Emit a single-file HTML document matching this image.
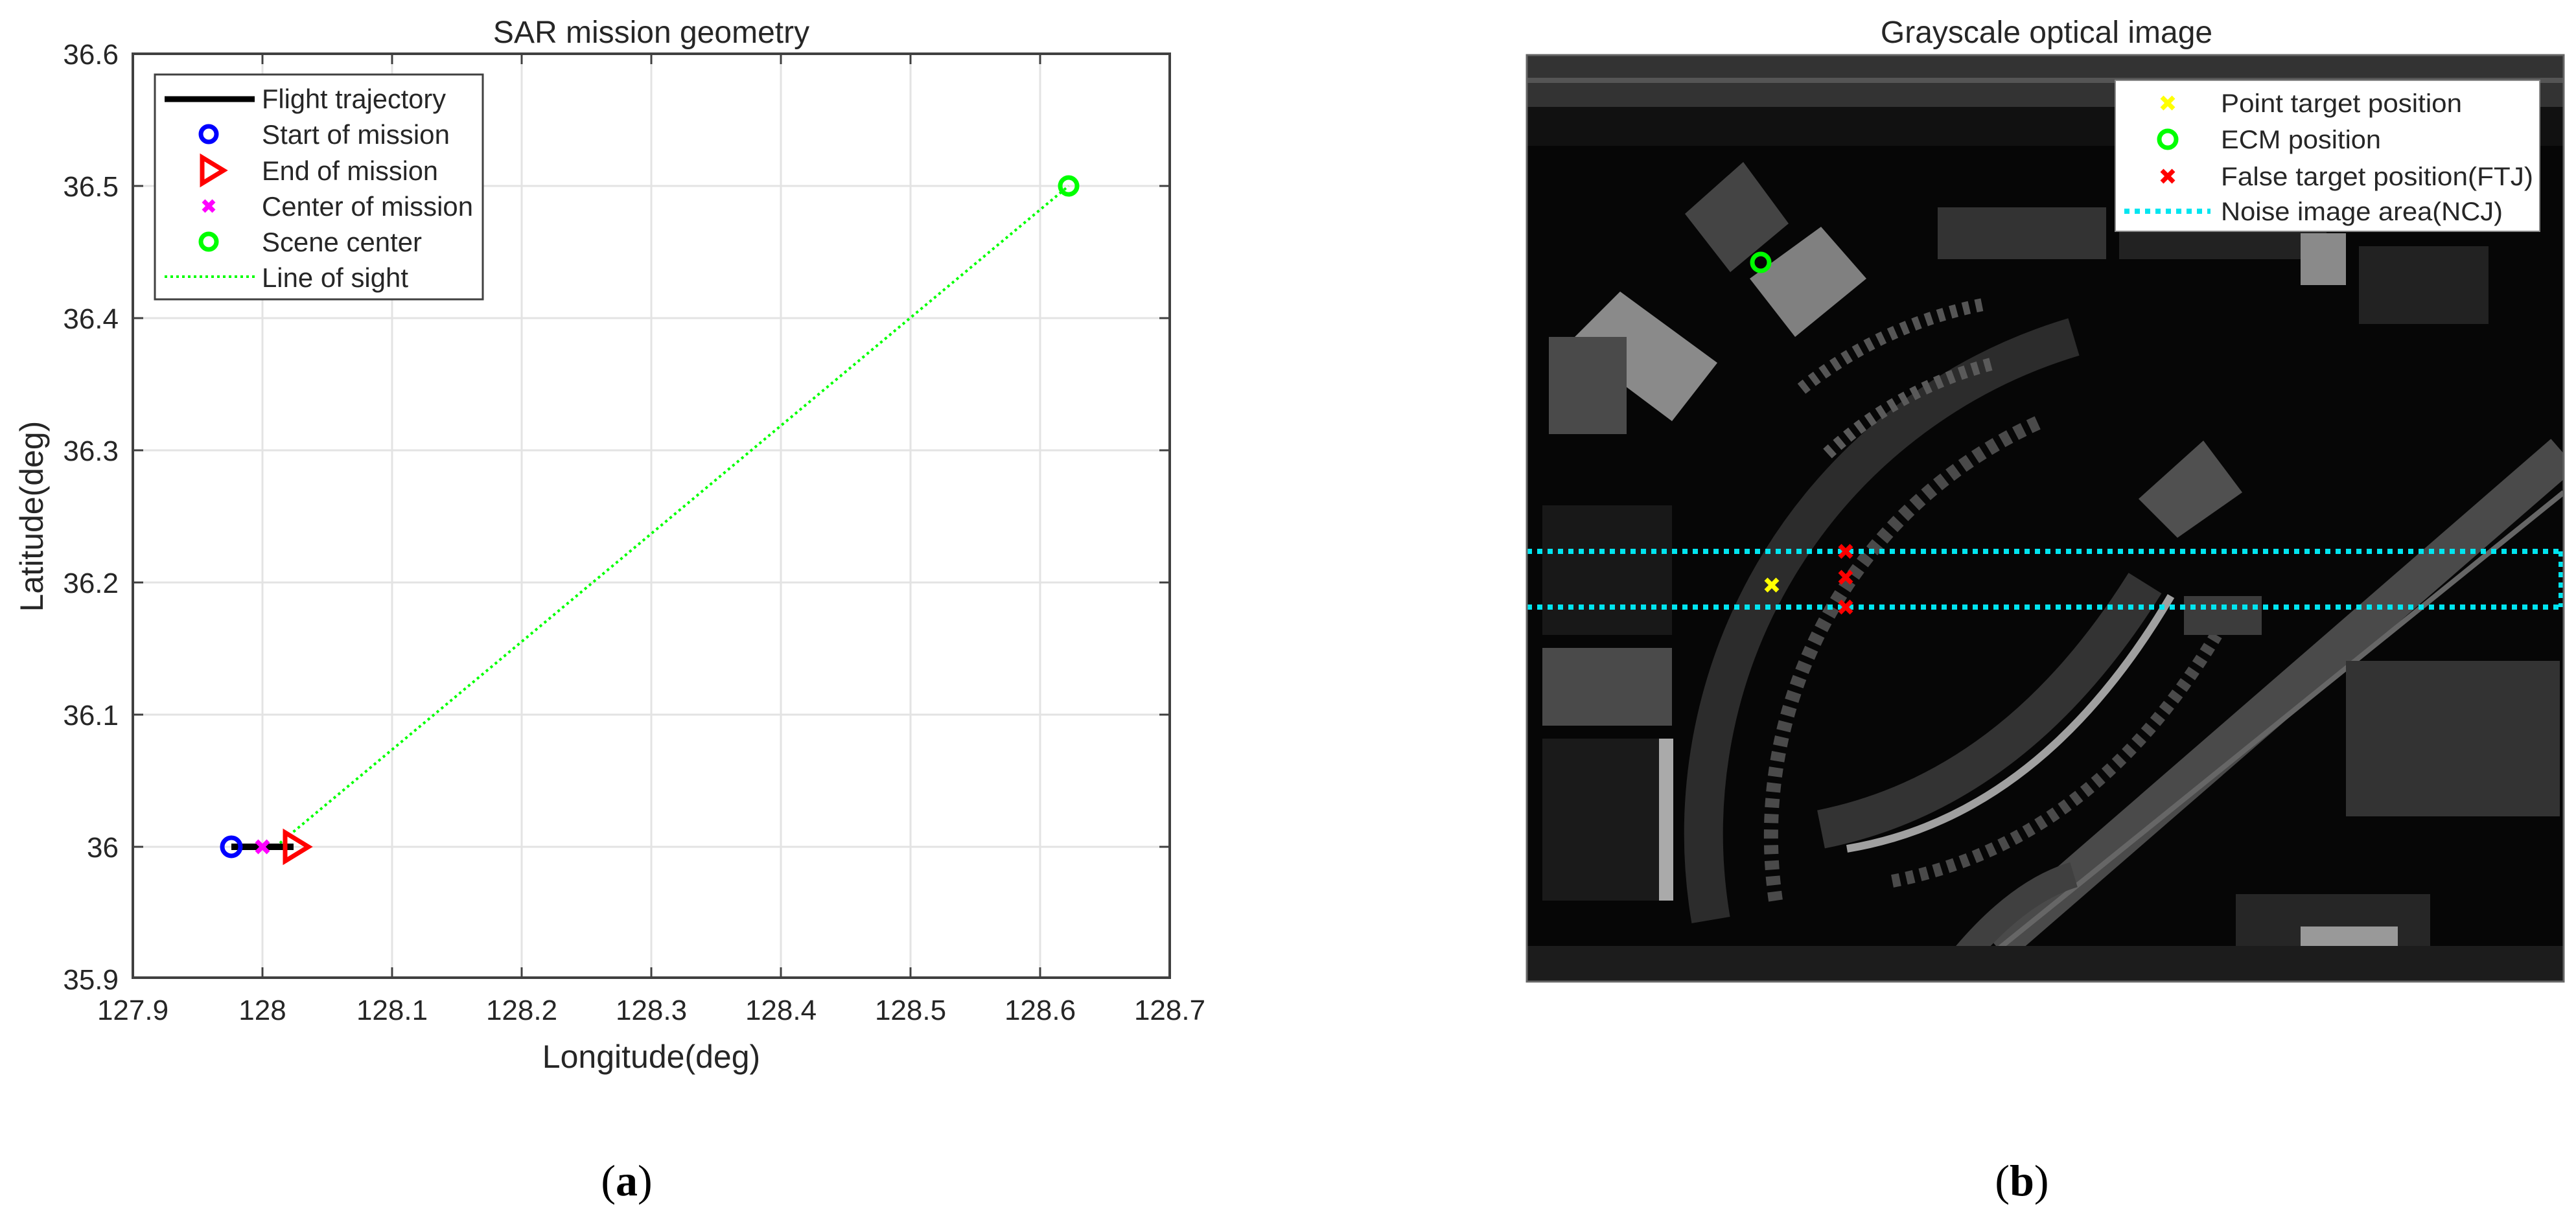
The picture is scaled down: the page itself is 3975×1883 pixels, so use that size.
<!DOCTYPE html>
<html><head><meta charset="utf-8"><style>
html,body{margin:0;padding:0;background:#fff;}
svg{display:block;}
text{font-family:"Liberation Sans",Arial,sans-serif;fill:#262626;}
</style></head><body>
<svg width="3975" height="1883" viewBox="0 0 3975 1883" xmlns="http://www.w3.org/2000/svg">
<rect width="3975" height="1883" fill="#fff"/>
<!-- ===== Panel (a) ===== -->
<text x="1005" y="66" font-size="48" text-anchor="middle" fill="#000">SAR mission geometry</text>
<g stroke="#e3e3e3" stroke-width="3">
<line x1="405" y1="83" x2="405" y2="1509"/><line x1="605" y1="83" x2="605" y2="1509"/>
<line x1="805" y1="83" x2="805" y2="1509"/><line x1="1005" y1="83" x2="1005" y2="1509"/>
<line x1="1205" y1="83" x2="1205" y2="1509"/><line x1="1405" y1="83" x2="1405" y2="1509"/>
<line x1="1605" y1="83" x2="1605" y2="1509"/>
<line x1="205" y1="287" x2="1805" y2="287"/><line x1="205" y1="491" x2="1805" y2="491"/>
<line x1="205" y1="695" x2="1805" y2="695"/><line x1="205" y1="899" x2="1805" y2="899"/>
<line x1="205" y1="1103" x2="1805" y2="1103"/><line x1="205" y1="1307" x2="1805" y2="1307"/>
</g>
<rect x="205" y="83" width="1600" height="1426" fill="none" stroke="#404040" stroke-width="4"/>
<g stroke="#404040" stroke-width="3">
<path d="M405 1509v-16M605 1509v-16M805 1509v-16M1005 1509v-16M1205 1509v-16M1405 1509v-16M1605 1509v-16"/>
<path d="M405 83v16M605 83v16M805 83v16M1005 83v16M1205 83v16M1405 83v16M1605 83v16"/>
<path d="M205 287h16M205 491h16M205 695h16M205 899h16M205 1103h16M205 1307h16"/>
<path d="M1805 287h-16M1805 491h-16M1805 695h-16M1805 899h-16M1805 1103h-16M1805 1307h-16"/>
</g>
<g font-size="44" text-anchor="end">
<text x="183" y="99">36.6</text><text x="183" y="303">36.5</text><text x="183" y="507">36.4</text>
<text x="183" y="711">36.3</text><text x="183" y="915">36.2</text><text x="183" y="1119">36.1</text>
<text x="183" y="1323">36</text><text x="183" y="1527">35.9</text>
</g>
<g font-size="44" text-anchor="middle">
<text x="205" y="1574">127.9</text><text x="405" y="1574">128</text><text x="605" y="1574">128.1</text>
<text x="805" y="1574">128.2</text><text x="1005" y="1574">128.3</text><text x="1205" y="1574">128.4</text>
<text x="1405" y="1574">128.5</text><text x="1605" y="1574">128.6</text><text x="1805" y="1574">128.7</text>
</g>
<text x="1005" y="1648" font-size="50" text-anchor="middle">Longitude(deg)</text>
<text transform="translate(66,797) rotate(-90)" font-size="50" text-anchor="middle">Latitude(deg)</text>
<!-- data -->
<line x1="425" y1="1307" x2="1649" y2="287" stroke="#00ff00" stroke-width="4" stroke-dasharray="4 5"/>
<line x1="357" y1="1307" x2="453" y2="1307" stroke="#000" stroke-width="10"/>
<circle cx="357" cy="1307" r="14" fill="none" stroke="#0000ff" stroke-width="7"/>
<path d="M440 1285 L476 1307 L440 1329 Z" fill="none" stroke="#ff0000" stroke-width="7" stroke-linejoin="miter"/>
<path d="M396 1298l18 18M414 1298l-18 18" stroke="#ff00ff" stroke-width="7"/>
<circle cx="1649" cy="287" r="13" fill="none" stroke="#00ff00" stroke-width="7"/>
<!-- legend a -->
<rect x="239" y="115" width="506" height="347" fill="#fff" stroke="#404040" stroke-width="3"/>
<line x1="254" y1="153" x2="393" y2="153" stroke="#000" stroke-width="9"/>
<circle cx="322" cy="207" r="12" fill="none" stroke="#0000ff" stroke-width="7"/>
<path d="M312 243 L345 263 L312 283 Z" fill="none" stroke="#ff0000" stroke-width="7"/>
<path d="M314 310l16 16M330 310l-16 16" stroke="#ff00ff" stroke-width="7"/>
<circle cx="322" cy="373" r="12" fill="none" stroke="#00ff00" stroke-width="7"/>
<line x1="254" y1="427" x2="393" y2="427" stroke="#00ff00" stroke-width="4" stroke-dasharray="4 5"/>
<g font-size="42" fill="#000">
<text x="404" y="167" textLength="284" lengthAdjust="spacingAndGlyphs">Flight trajectory</text>
<text x="404" y="222" textLength="290" lengthAdjust="spacingAndGlyphs">Start of mission</text>
<text x="404" y="278" textLength="272" lengthAdjust="spacingAndGlyphs">End of mission</text>
<text x="404" y="333" textLength="326" lengthAdjust="spacingAndGlyphs">Center of mission</text>
<text x="404" y="388" textLength="247" lengthAdjust="spacingAndGlyphs">Scene center</text>
<text x="404" y="443" textLength="226" lengthAdjust="spacingAndGlyphs">Line of sight</text>
</g>
<text x="967" y="1845" font-size="68" text-anchor="middle" style="font-family:'Liberation Serif',serif;fill:#000">(<tspan font-weight="bold">a</tspan>)</text>
<!-- ===== Panel (b) ===== -->
<text x="3158" y="66" font-size="48" text-anchor="middle" fill="#000">Grayscale optical image</text>
<defs><clipPath id="ci"><rect x="2356" y="85" width="1600" height="1430"/></clipPath></defs>
<g clip-path="url(#ci)">
<rect x="2356" y="85" width="1600" height="1430" fill="#060606"/>
<rect x="2356" y="85" width="1600" height="80" fill="#333"/>
<rect x="2356" y="120" width="1600" height="8" fill="#555"/>
<rect x="2356" y="165" width="1600" height="60" fill="#111"/>
<polygon points="2600,330 2690,250 2760,345 2670,420" fill="#444"/>
<polygon points="2700,430 2810,350 2880,430 2770,520" fill="#808080"/>
<polygon points="2420,530 2500,450 2650,560 2580,650" fill="#8a8a8a"/>
<rect x="2390" y="520" width="120" height="150" fill="#4a4a4a"/>
<rect x="2990" y="320" width="260" height="80" fill="#333"/>
<rect x="3270" y="320" width="320" height="80" fill="#222"/>
<rect x="3550" y="360" width="70" height="80" fill="#8a8a8a"/>
<rect x="3640" y="380" width="200" height="120" fill="#222"/>
<rect x="2380" y="780" width="200" height="200" fill="#181818"/>
<rect x="2380" y="1000" width="200" height="120" fill="#4a4a4a"/>
<rect x="2380" y="1140" width="200" height="250" fill="#1a1a1a"/>
<rect x="2560" y="1140" width="22" height="250" fill="#aaa"/>
<g fill="none">
<path d="M2640 1420 A 800 800 0 0 1 3200 520" stroke="#2c2c2c" stroke-width="60"/>
<path d="M2740 1390 A 700 700 0 0 1 3150 650" stroke="#4a4a4a" stroke-width="22" stroke-dasharray="14 10"/>
<path d="M2820 700 A 600 600 0 0 1 3080 560" stroke="#5a5a5a" stroke-width="20" stroke-dasharray="10 10"/>
<path d="M2780 600 A 650 650 0 0 1 3060 470" stroke="#555" stroke-width="20" stroke-dasharray="10 10"/>
<path d="M2850 1310 Q3150 1260 3350 920" stroke="#a0a0a0" stroke-width="12"/>
<path d="M2810 1280 Q3110 1220 3310 900" stroke="#333" stroke-width="60"/>
<path d="M2920 1360 Q3230 1300 3420 980" stroke="#4a4a4a" stroke-width="20" stroke-dasharray="12 10"/>
<path d="M3080 1460 L3956 700" stroke="#4a4a4a" stroke-width="60"/>
<path d="M3040 1500 L3956 760" stroke="#666" stroke-width="8"/>
<path d="M3000 1515 Q3100 1380 3200 1350" stroke="#404040" stroke-width="40"/>
</g>
<rect x="3370" y="920" width="120" height="60" fill="#3c3c3c"/>
<polygon points="3300,770 3400,680 3460,760 3360,830" fill="#505050"/>
<rect x="3620" y="1020" width="330" height="240" fill="#333"/>
<rect x="3450" y="1380" width="300" height="130" fill="#262626"/>
<rect x="3550" y="1430" width="150" height="30" fill="#999"/>
<rect x="2356" y="1460" width="1600" height="55" fill="#1c1c1c"/>
<g fill="none" stroke="#00e5f0" stroke-width="8" stroke-dasharray="8 8">
<line x1="2356" y1="851" x2="3956" y2="851"/>
<line x1="2356" y1="937" x2="3956" y2="937"/>
<line x1="3952" y1="851" x2="3952" y2="937"/>
</g>
<path d="M2725 894l18 18M2743 894l-18 18" stroke="#ffff00" stroke-width="7"/>
<path d="M2839 842l18 18M2857 842l-18 18M2839 882l18 18M2857 882l-18 18M2839 928l18 18M2857 928l-18 18" stroke="#ff0000" stroke-width="7"/>
<circle cx="2717" cy="405" r="13" fill="none" stroke="#00ff00" stroke-width="7"/>
</g>
<rect x="2356" y="85" width="1600" height="1430" fill="none" stroke="#666" stroke-width="3"/>
<rect x="3264" y="124" width="655" height="233" fill="#fff" stroke="#888" stroke-width="2"/>
<path d="M3336 150l18 18M3354 150l-18 18" stroke="#ffff00" stroke-width="7"/>
<circle cx="3345" cy="215" r="13" fill="none" stroke="#00ff00" stroke-width="7"/>
<path d="M3336 263l18 18M3354 263l-18 18" stroke="#ff0000" stroke-width="7"/>
<line x1="3278" y1="326" x2="3411" y2="326" stroke="#00e5f0" stroke-width="8" stroke-dasharray="8 8"/>
<g font-size="40" fill="#000">
<text x="3427" y="173" textLength="372" lengthAdjust="spacingAndGlyphs">Point target position</text>
<text x="3427" y="229" textLength="247" lengthAdjust="spacingAndGlyphs">ECM position</text>
<text x="3427" y="286" textLength="482" lengthAdjust="spacingAndGlyphs">False target position(FTJ)</text>
<text x="3427" y="340" textLength="435" lengthAdjust="spacingAndGlyphs">Noise image area(NCJ)</text>
</g>
<text x="3120" y="1845" font-size="68" text-anchor="middle" style="font-family:'Liberation Serif',serif;fill:#000">(<tspan font-weight="bold">b</tspan>)</text>
</svg>
</body></html>
